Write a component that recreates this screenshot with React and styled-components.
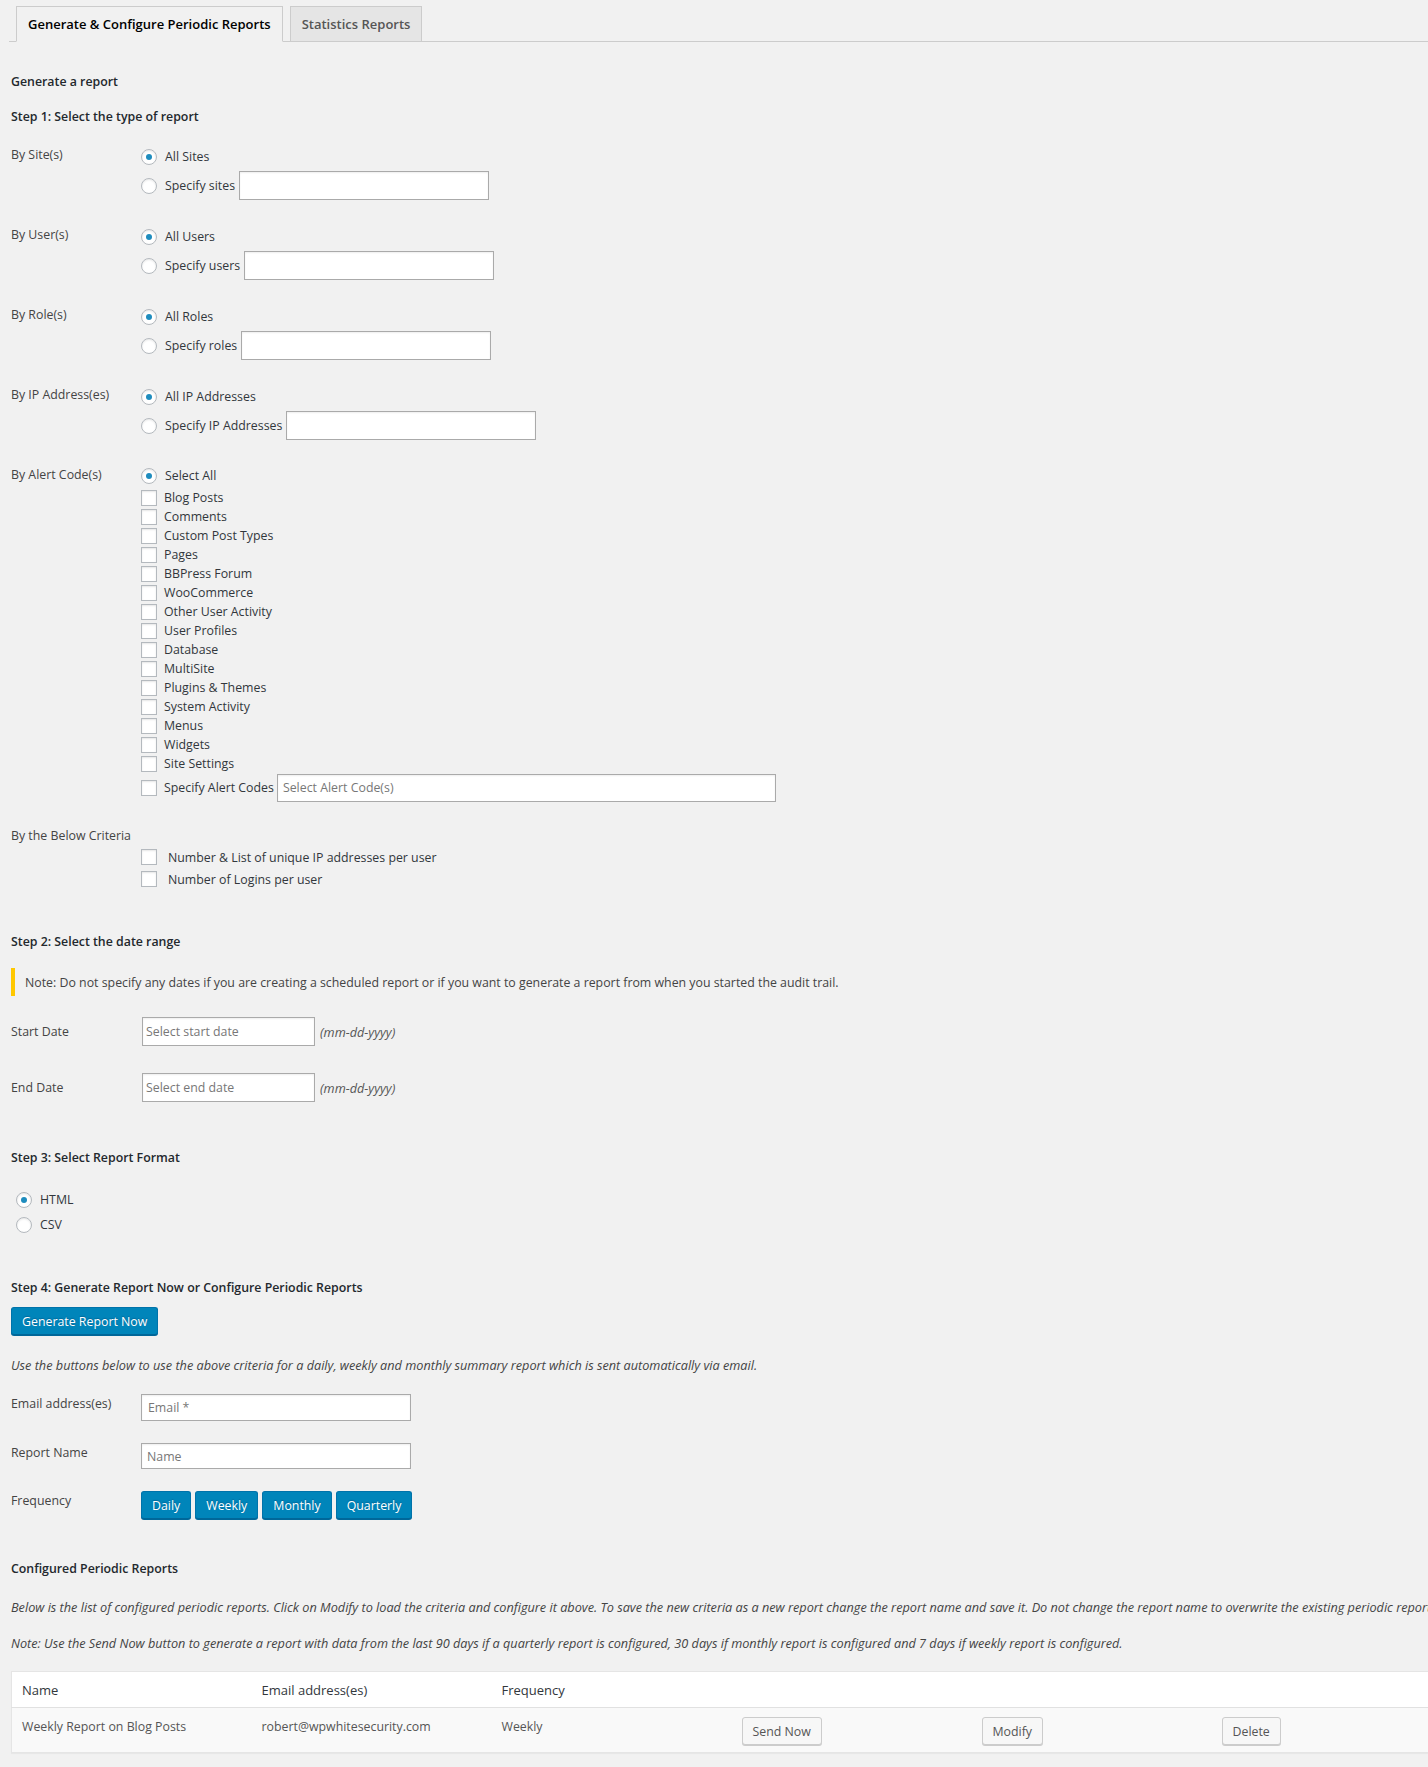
import React from 'react'
import styled, { createGlobalStyle } from 'styled-components'

const GlobalStyle = createGlobalStyle`
    body {
        margin: 0;
        background: #f1f1f1;
        font-family: "Open Sans", "Liberation Sans", sans-serif;
        font-size: 12.35px;
        color: #444;
        overflow-x: hidden;
    }
    * { box-sizing: border-box; }
`

const Page = styled.div`
    width: 1428px;
    min-height: 1767px;
    overflow: hidden;
    padding-bottom: 14px;
`

const TabBar = styled.div`
    display: flex;
    gap: 7px;
    margin-left: 9px;
    padding: 6px 0 0 7px;
    border-bottom: 1px solid #ccc;
`

const Tab = styled.div`
    height: 36px;
    margin-bottom: -1px;
    padding: 0 11px;
    display: flex;
    align-items: center;
    font-size: 13px;
    font-weight: 600;
    border: 1px solid #ccc;
    border-bottom-color: ${p => (p.$active ? '#f1f1f1' : '#ccc')};
    background: ${p => (p.$active ? '#f1f1f1' : '#e5e5e5')};
    color: ${p => (p.$active ? '#000' : '#555')};
`

const Content = styled.div`
    padding: 0 11px;
`

const Title = styled.div`
    margin-top: ${p => p.$mt || 0}px;
    line-height: 20px;
    font-weight: ${p => (p.$plain ? 400 : 600)};
    color: ${p => (p.$plain ? '#444' : '#23282d')};
`

const Group = styled.div`
    display: grid;
    grid-template-columns: 130px 1fr;
    align-items: start;
    margin-top: ${p => p.$mt || 0}px;
`

const GroupLabel = styled.div`
    line-height: 20px;
    padding-top: ${p => p.$pt || 0}px;
    color: #444;
`

const Options = styled.div`
    display: flex;
    flex-direction: column;
    padding-left: ${p => p.$pl || 0}px;
    margin-top: ${p => p.$mt || 0}px;
`

const Row = styled.div`
    display: flex;
    align-items: center;
    height: ${p => p.$h || 29}px;
    color: #32373c;
`

const Radio = styled.span`
    width: 16px;
    height: 16px;
    flex: none;
    border-radius: 50%;
    border: 1px solid #b4b9be;
    background: #fff;
    box-shadow: inset 0 1px 2px rgba(0, 0, 0, 0.1);
    margin-right: 8px;
    display: flex;
    align-items: center;
    justify-content: center;
    &::before {
        content: '';
        width: 6px;
        height: 6px;
        border-radius: 50%;
        background: ${p => (p.$checked ? '#1e8cbe' : 'transparent')};
    }
`

const Check = styled.span`
    width: 16px;
    height: 16px;
    flex: none;
    border: 1px solid #b4b9be;
    background: #fff;
    box-shadow: inset 0 1px 2px rgba(0, 0, 0, 0.1);
    margin-right: ${p => p.$gap || 7}px;
`

const TextInput = styled.input`
    width: ${p => p.$w}px;
    height: ${p => p.$h || 29}px;
    margin-left: ${p => p.$ml || 0}px;
    border: 1px solid #aaa;
    background: #fff;
    box-shadow: inset 0 1px 2px rgba(0, 0, 0, 0.07);
    padding: 0 ${p => p.$pad || 5}px;
    font-family: inherit;
    font-size: 12.35px;
    color: #32373c;
    outline: none;
    &::placeholder {
        color: #777;
    }
`

const Notice = styled.div`
    margin-top: ${p => p.$mt || 0}px;
    height: 28px;
    border-left: 4px solid #ffc800;
    padding-left: 10px;
    display: flex;
    align-items: center;
    color: #444;
`

const DateRow = styled.div`
    display: grid;
    grid-template-columns: 131px auto auto 1fr;
    align-items: center;
    margin-top: ${p => p.$mt || 0}px;
`

const Hint = styled.span`
    font-style: italic;
    font-size: 12.7px;
    color: #555;
    margin-left: 5px;
`

const PrimaryButton = styled.button`
    height: 28px;
    padding: 0 ${p => p.$pad || 10}px;
    margin-top: ${p => p.$mt || 0}px;
    background: #0085ba;
    border: 1px solid #0073aa;
    border-bottom-color: #006799;
    border-radius: 3px;
    box-shadow: 0 1px 0 #006799;
    color: #fff;
    font-family: inherit;
    font-size: 12.35px;
    text-shadow: 0 -1px 1px #006799;
    cursor: pointer;
`

const SecondaryButton = styled.button`
    height: 28px;
    padding: 0 ${p => p.$pad || 10}px;
    background: #f7f7f7;
    border: 1px solid #ccc;
    border-radius: 3px;
    box-shadow: 0 1px 0 #ccc;
    color: #555;
    font-family: inherit;
    font-size: 12.35px;
    cursor: pointer;
`

const Italic = styled.div`
    margin-top: ${p => p.$mt || 0}px;
    line-height: 20px;
    font-style: italic;
    font-size: 12.7px;
    color: #444;
    white-space: nowrap;
`

const FormRow = styled.div`
    display: grid;
    grid-template-columns: 130px 1fr;
    align-items: start;
    margin-top: ${p => p.$mt || 0}px;
`

const ButtonGroup = styled.div`
    display: flex;
    gap: 4px;
`

const Table = styled.table`
    margin-top: ${p => p.$mt || 0}px;
    width: 1440px;
    table-layout: fixed;
    border-collapse: collapse;
    border: 1px solid #e5e5e5;
    background: #fff;
    box-shadow: 0 1px 1px rgba(0, 0, 0, 0.04);
`

const Th = styled.th`
    width: 240px;
    height: 36px;
    padding: 0 10px;
    text-align: left;
    font-weight: 400;
    font-size: 13px;
    color: #32373c;
    border-bottom: 1px solid #e1e1e1;
`

const Td = styled.td`
    height: 45px;
    padding: 9px 10px 0;
    vertical-align: top;
    background: #f9f9f9;
    color: #555;
    line-height: 20px;
`

const SpecifyGroup = ({ label, all, specify, mt }) => (
    <Group $mt={mt}>
        <GroupLabel $pt={3}>{label}</GroupLabel>
        <Options>
            <Row><Radio $checked />{all}</Row>
            <Row><Radio />{specify}<TextInput $w={250} $ml={4} /></Row>
        </Options>
    </Group>
)

const alertCodes = [
    'Blog Posts', 'Comments', 'Custom Post Types', 'Pages', 'BBPress Forum',
    'WooCommerce', 'Other User Activity', 'User Profiles', 'Database', 'MultiSite',
    'Plugins & Themes', 'System Activity', 'Menus', 'Widgets', 'Site Settings',
]

const App = () => {
    return (
        <Page>
            <GlobalStyle />
            <TabBar>
                <Tab $active>Generate &amp; Configure Periodic Reports</Tab>
                <Tab>Statistics Reports</Tab>
            </TabBar>

            <Content>
                <Title $mt={30}>Generate a report</Title>
                <Title $mt={15}>Step 1: Select the type of report</Title>

                <SpecifyGroup mt={15} label="By Site(s)" all="All Sites" specify="Specify sites" />
                <SpecifyGroup mt={22} label="By User(s)" all="All Users" specify="Specify users" />
                <SpecifyGroup mt={22} label="By Role(s)" all="All Roles" specify="Specify roles" />
                <SpecifyGroup mt={22} label="By IP Address(es)" all="All IP Addresses" specify="Specify IP Addresses" />

                <Group $mt={23}>
                    <GroupLabel $pt={2}>By Alert Code(s)</GroupLabel>
                    <Options>
                        <Row $h={25}><Radio $checked />Select All</Row>
                        {alertCodes.map(code => (
                            <Row $h={19} key={code}><Check />{code}</Row>
                        ))}
                        <Row $h={29}>
                            <Check />Specify Alert Codes
                            <TextInput $w={499} $h={28} $ml={3} placeholder="Select Alert Code(s)" />
                        </Row>
                    </Options>
                </Group>

                <Title $plain $mt={24}>By the Below Criteria</Title>
                <Options $pl={130}>
                    <Row $h={22}><Check $gap={11} />Number &amp; List of unique IP addresses per user</Row>
                    <Row $h={22}><Check $gap={11} />Number of Logins per user</Row>
                </Options>

                <Title $mt={42}>Step 2: Select the date range</Title>
                <Notice $mt={16}>Note: Do not specify any dates if you are creating a scheduled report or if you want to generate a report from when you started the audit trail.</Notice>

                <DateRow $mt={21}>
                    <GroupLabel>Start Date</GroupLabel>
                    <TextInput $w={173} $pad={3} placeholder="Select start date" />
                    <Hint>(mm-dd-yyyy)</Hint>
                </DateRow>
                <DateRow $mt={27}>
                    <GroupLabel>End Date</GroupLabel>
                    <TextInput $w={173} $pad={3} placeholder="Select end date" />
                    <Hint>(mm-dd-yyyy)</Hint>
                </DateRow>

                <Title $mt={46}>Step 3: Select Report Format</Title>
                <Options $mt={19} $pl={5}>
                    <Row $h={25}><Radio $checked />HTML</Row>
                    <Row $h={25}><Radio />CSV</Row>
                </Options>

                <Title $mt={41}>Step 4: Generate Report Now or Configure Periodic Reports</Title>
                <div>
                    <PrimaryButton $mt={9}>Generate Report Now</PrimaryButton>
                </div>
                <Italic $mt={20}>Use the buttons below to use the above criteria for a daily, weekly and monthly summary report which is sent automatically via email.</Italic>

                <FormRow $mt={19}>
                    <GroupLabel>Email address(es)</GroupLabel>
                    <TextInput $w={270} $h={27} $pad={6} placeholder="Email *" />
                </FormRow>
                <FormRow $mt={22}>
                    <GroupLabel>Report Name</GroupLabel>
                    <TextInput $w={270} $h={26} $pad={5} placeholder="Name" />
                </FormRow>
                <FormRow $mt={22}>
                    <GroupLabel>Frequency</GroupLabel>
                    <ButtonGroup>
                        <PrimaryButton>Daily</PrimaryButton>
                        <PrimaryButton>Weekly</PrimaryButton>
                        <PrimaryButton>Monthly</PrimaryButton>
                        <PrimaryButton>Quarterly</PrimaryButton>
                    </ButtonGroup>
                </FormRow>

                <Title $mt={40}>Configured Periodic Reports</Title>
                <Italic $mt={18}>Below is the list of configured periodic reports. Click on Modify to load the criteria and configure it above. To save the new criteria as a new report change the report name and save it. Do not change the report name to overwrite the existing periodic report.</Italic>
                <Italic $mt={16}>Note: Use the Send Now button to generate a report with data from the last 90 days if a quarterly report is configured, 30 days if monthly report is configured and 7 days if weekly report is configured.</Italic>

                <Table $mt={18}>
                    <thead>
                        <tr>
                            <Th>Name</Th>
                            <Th>Email address(es)</Th>
                            <Th>Frequency</Th>
                            <Th />
                            <Th />
                            <Th />
                        </tr>
                    </thead>
                    <tbody>
                        <tr>
                            <Td>Weekly Report on Blog Posts</Td>
                            <Td>robert@wpwhitesecurity.com</Td>
                            <Td>Weekly</Td>
                            <Td><SecondaryButton>Send Now</SecondaryButton></Td>
                            <Td><SecondaryButton>Modify</SecondaryButton></Td>
                            <Td><SecondaryButton>Delete</SecondaryButton></Td>
                        </tr>
                    </tbody>
                </Table>
            </Content>
        </Page>
    )
}

export default App
